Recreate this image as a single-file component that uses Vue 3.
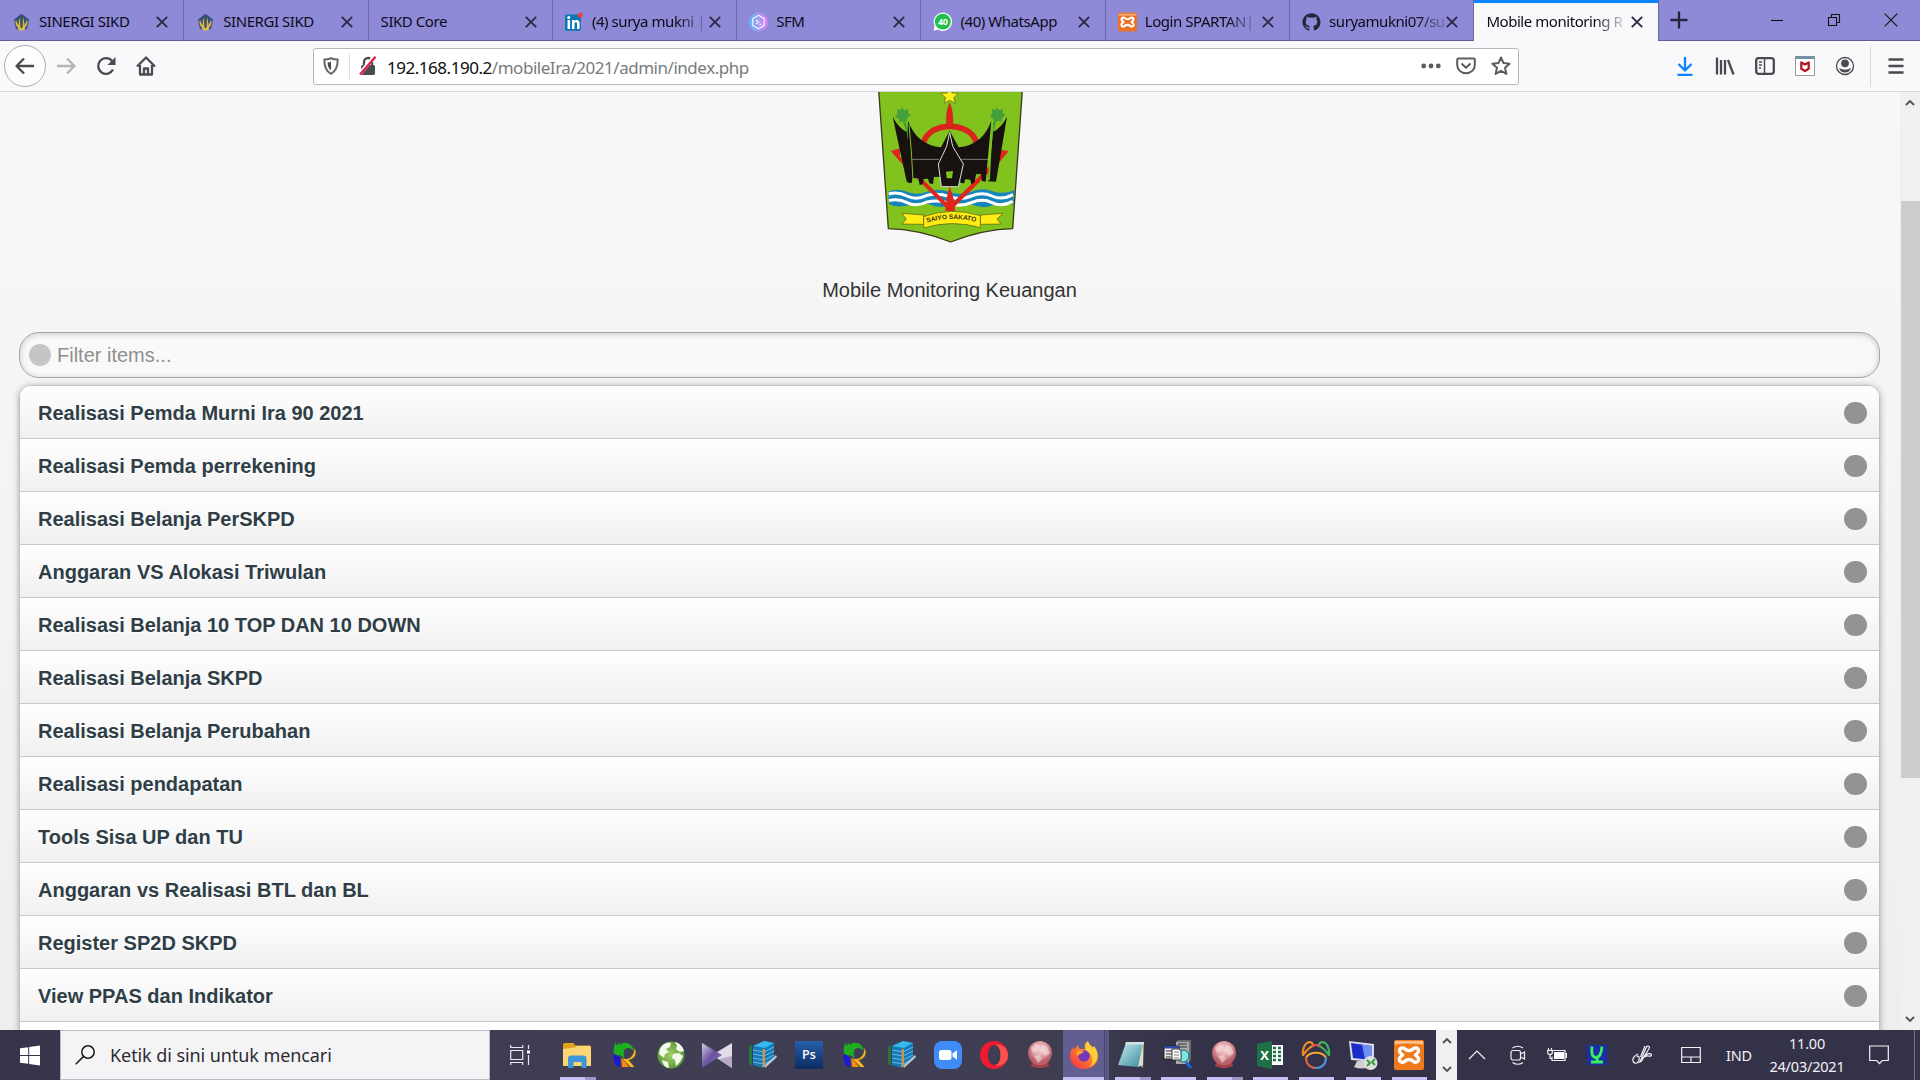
<script setup>
const tabs = [
  { title: 'SINERGI SIKD', icon: 'sikd' },
  { title: 'SINERGI SIKD', icon: 'sikd' },
  { title: 'SIKD Core' },
  { title: '(4) surya mukni |', icon: 'linkedin', fade: true },
  { title: 'SFM', icon: 'sfm' },
  { title: '(40) WhatsApp', icon: 'whatsapp' },
  { title: 'Login SPARTAN|', icon: 'xampp', fade: true },
  { title: 'suryamukni07/su', icon: 'github', fade: true },
  { title: 'Mobile monitoring R', active: true, fade: true },
]

const items = [
  'Realisasi Pemda Murni Ira 90 2021',
  'Realisasi Pemda perrekening',
  'Realisasi Belanja PerSKPD',
  'Anggaran VS Alokasi Triwulan',
  'Realisasi Belanja 10 TOP DAN 10 DOWN',
  'Realisasi Belanja SKPD',
  'Realisasi Belanja Perubahan',
  'Realisasi pendapatan',
  'Tools Sisa UP dan TU',
  'Anggaran vs Realisasi BTL dan BL',
  'Register SP2D SKPD',
  'View PPAS dan Indikator',
]

// state: '' = pinned only, 'one' = one window, 'many' = stacked windows
const apps = [
  { icon: 'explorer', state: 'many' },
  { icon: 'swirl', state: '' },
  { icon: 'globe', state: '' },
  { icon: 'kmp', state: '' },
  { icon: 'books', state: '' },
  { icon: 'ps', state: '' },
  { icon: 'swirl', state: '' },
  { icon: 'books', state: '' },
  { icon: 'zoom', state: '' },
  { icon: 'opera', state: '' },
  { icon: 'redglobe', state: '' },
  { icon: 'firefox', state: 'many', active: true },
  { icon: 'notepad', state: 'many' },
  { icon: 'server', state: 'one' },
  { icon: 'redglobe', state: 'many' },
  { icon: 'excel', state: 'one' },
  { icon: 'navicat', state: 'one' },
  { icon: 'remote', state: 'one' },
  { icon: 'xamppBig', state: 'one' },
]

const xamppMark =
  '<path d="M9.6 8.2c-3-.6-4.4 1.2-4 3.2.2 1.6 1.6 2.2 3 3.6-1.6 1.4-3 2.2-3.2 3.9-.3 2.2 1.4 3.8 4.2 3.1 1.400-.3 1.800-2.500 5.400-2.500s4 2.200 5.400 2.500c2.800.700 4.500-.9 4.200-3.100-.2-1.700-1.600-2.500-3.200-3.900 1.400-1.400 2.800-2 3-3.600.4-2-1-3.800-4-3.200-1.600.3-2.200 2.400-5.400 2.400s-3.800-2.100-5.400-2.400z" fill="none" stroke="#fff" stroke-width="3.400" stroke-linejoin="round"/>'

// every glyph is drawn on a 30 x 30 grid
const glyphs = {
  sikd:
    '<path d="M15 2 27 11 23.500 27h-17L3 11z" fill="#33527c"/><path d="M6 11c-2 9 3 14 8 15l-1-13-1-5-2 12zM24 11c2 9-3 14-8 15l1-13 1-5 2 12z" fill="#d9b944"/><path d="M12.500 7h5l-1 16h-3z" fill="#4a5560"/><path d="M8 25h14l-3 3h-8z" fill="#e3c54d"/>',
  linkedin:
    '<rect x="0" y="3" width="25" height="26" rx="2" fill="#0b76b4"/><path d="M4 12h4v14H4zM11 12h4v2c2-3.500 8-3 8 3v9h-4v-8c0-4-4-3-4 0v8h-4z" fill="#fff"/><circle cx="6" cy="8" r="2.400" fill="#fff"/><circle cx="24" cy="4" r="4" fill="#e8433f"/>',
  sfm:
    '<circle cx="15" cy="15" r="15" fill="url(#g-sfm)"/><path d="M15 4.500 24 9.500v11L15 25.500 6 20.500v-11z" fill="none" stroke="#fff" stroke-width="1.700"/><path d="m11 11.500 4 3.500-4 3.500M16 18.500h4" fill="none" stroke="#fff" stroke-width="1.700"/>',
  whatsapp:
    '<path d="M1 29 2.500 21A14.500 14.500 0 1 1 8 27z" fill="#fff"/><circle cx="15.500" cy="14.500" r="12.500" fill="#1fbf4b"/><text x="15.500" y="19.500" text-anchor="middle" font-family="Open Sans, sans-serif" font-weight="700" font-size="14" fill="#fff">40</text>',
  xampp: '<rect width="30" height="30" rx="3" fill="#ea7226"/><path d="M1 2h28v3H1z" fill="#f5a873"/>' + xamppMark,
  xamppBig:
    '<rect width="30" height="30" rx="2" fill="#ee7a1c"/><path d="M1 1h28v3.500C20 3 10 3 1 4.500z" fill="#f9c08d"/>' + xamppMark,
  github:
    '<path d="M15 1C7 1 .8 7.200.8 15c0 6.300 4 11.600 9.700 13.500.7.100 1-.3 1-.7v-2.600c-4 .9-4.800-1.700-4.800-1.700-.7-1.700-1.600-2.100-1.600-2.100-1.300-.9.100-.9.100-.9 1.400.1 2.200 1.500 2.200 1.500 1.300 2.200 3.300 1.500 4.100 1.200.1-.9.500-1.500.9-1.900-3.200-.4-6.500-1.600-6.500-7 0-1.600.5-2.800 1.400-3.800-.1-.4-.6-1.800.2-3.800 0 0 1.200-.4 3.900 1.500a13.500 13.500 0 0 1 7.200 0c2.700-1.900 3.900-1.500 3.900-1.500.8 2 .3 3.400.2 3.800.9 1 1.400 2.200 1.400 3.800 0 5.400-3.300 6.600-6.500 7 .5.400 1 1.300 1 2.600v3.900c0 .4.200.8 1 .7A14.200 14.200 0 0 0 29.200 15C29.200 7.200 23 1 15 1z" fill="#24243a"/>',
  explorer:
    '<path d="M1 4.500q0-1.500 1.500-1.500h9l2 2.500h14q1.500 0 1.500 1.500v18H1z" fill="#e0a21d"/><path d="M1 9 13 7.500 15 6h12.500Q29 6 29 7.500V26H1z" fill="#fdd674"/><path d="M6 28v-9.500q0-3 3-3h12.500q3 0 3 3V28h-5v-6h-8v6z" fill="#3a96d8"/>',
  swirl:
    '<path d="M4 14C3 9 4 5 6 2l.5 4L9 2.500 9.500 5C15 0 23 4 24 11c-4-4-9-4-10 0-1 3 1 4 0 7l-4-3-3 1z" fill="#1fae1f"/><path d="M4 14c5 1 7 4 6 12l-2 1C4 24 3 19 4 14z" fill="#1919d8"/><path d="M24.500 8c3 6 0 11-6 12l6 7h-4L12 18c7 3 12-1 12.500-10z" fill="#fdb516"/><path d="M11 18q4 3 8 9h-7z" fill="#f58a14"/>',
  globe:
    '<circle cx="15" cy="15" r="13.500" fill="url(#g-green)"/><path d="M4 9C7 3 12 2 15 3l-1 4-4 2 3 3-4 2-1 4-5-4zM19 2c5 1 8 5 9 9l-4 1-4-3 1-3zM17 14l6-1 4 3-3 6-4 4-1-6-3-2zM6 20l6 2 1 6c-3 0-6-3-7-8z" fill="#f5f8ee"/>',
  kmp:
    '<path d="M30 3 10 15l20 13z" fill="#e1dbea"/><path d="m30 16v12L17 19z" fill="#b9a9cc"/><path d="M0 3 20 15 0 28z" fill="url(#g-kmp)"/>',
  books:
    '<path d="m1 7 3-2v21l-3-2z" fill="#27763c"/><path d="m5 6 11-5 10 2v17L15 28 5 25z" fill="#1479b7"/><path d="m5 6 11-5 10 2-9 5z" fill="#36b8ec"/><path d="M5 10l11 2 10-5M5 14l11 2 10-5M5 18l11 2 10-5M5 22l11 2 10-5" stroke="#6dbbe6" stroke-width="1" fill="none"/><path d="M14.500 9h2.500v18h-2.500z" fill="#c7964f"/><path d="m17 25 11-10 1 2-12 11z" fill="#b9c8d2"/>',
  ps: '<rect x="1" y="1" width="28" height="28" fill="url(#g-ps)"/><text x="15" y="19" text-anchor="middle" font-family="Open Sans, sans-serif" font-weight="600" font-size="12.500" fill="#fff">Ps</text>',
  zoom:
    '<rect x="1" y="1" width="28" height="28" rx="8" fill="#3f8cf8"/><rect x="6" y="10" width="12.500" height="10" rx="2.500" fill="#fff"/><path d="m19.500 13.500 4.500-3.200v9.400l-4.500-3.200z" fill="#fff"/>',
  opera:
    '<path fill-rule="evenodd" d="M15 1a14 14 0 1 0 0 28 14 14 0 0 0 0-28zM15.500 5c4 0 6 4.500 6 10s-2 10-6 10-6.500-4.500-6.500-10 2.500-10 6.500-10z" fill="#ec1c2e"/><path d="M15.500 5c4-2 13 1 13.500 10S20 27 15.500 25c4 0 6-4.500 6-10s-2-10-6-10z" fill="#fb504c"/>',
  redglobe:
    '<path d="M7 22h16l1 4q-9 4-18 0z" fill="#a83f49"/><circle cx="15" cy="13" r="12" fill="url(#g-red)"/><path d="m6 8 5-4 4 2-3 5-4 2zM17 5l5 2 3 6-4 3-5-5zM9 16l5-1 3 4-4 4z" fill="#f7dfe0" opacity=".6"/>',
  firefox:
    '<path d="M15 29C6 29 1 23 1 16c0-4 1.500-7 3-9l1 3c1-2 3-4 4-5 0 2 1 3 2 4h5c-1-4 0-6 3-8 1 4 3 4 5 7l1-2c3 4 4 7 4 10 0 8-6 13-14 13z" fill="url(#g-fox)"/><path d="M19 1c1 4 3 4 5 7l1-2c6 9 3 17-4 21 4-6 3-12-2-15-3-3-4-6 0-11z" fill="#ffcd38"/><circle cx="15" cy="16" r="5.800" fill="#7139ba"/><path d="M8 11c3-2 6 0 7 1-2 2-4 1-6 4-2-1-2-3-1-5z" fill="#ff9a31"/>',
  notepad:
    '<path d="m9 3 18 1-1 24-6-5z" fill="#b0a37f"/><path d="M9 3h17l-5 24L1 25z" fill="url(#g-note)"/><path d="M9 2h18v2.500H8z" fill="#d7e0e3"/><path d="m26 4-5 23 5-2z" fill="#dedbd0"/>',
  server:
    '<path d="M13 2h13v22H13z" fill="#a9a9a9"/><path d="M13 2 15 0h13l-2 2zM26 2l2-2v20l-2 2z" fill="#6c6c6c"/><path d="M15 4h9M15 7h9" stroke="#333"/><rect x="1" y="6" width="15" height="13" fill="#e9e9e9" stroke="#222"/><path d="M1 6h15v2.500H1z" fill="#3048a8"/><path d="M3 11h6M3 14h6M3 17h5" stroke="#333"/><circle cx="20" cy="16" r="6" fill="#7ae4e0" stroke="#156a73"/><path d="M9 9h7l2 2v9H9z" fill="#fff" stroke="#333"/><path d="M11 12h5M11 15h5M11 18h5" stroke="#777"/><path d="m23 22 5 6" stroke="#1c62dc" stroke-width="3"/>',
  excel:
    '<path d="M14 5h14v20H14z" fill="#fff"/><path d="M18 8h3M23 8h3M18 12h3M23 12h3M18 16h3M23 16h3M18 20h3M23 20h3" stroke="#1f7145" stroke-width="2.500"/><path d="m2 4 15-3v28L2 26z" fill="#1f7145"/><text x="9.500" y="20" text-anchor="middle" font-family="Open Sans, sans-serif" font-weight="700" font-size="13" fill="#fff">X</text>',
  navicat:
    '<g fill="none" stroke-width="2.200" stroke-linecap="round"><path d="M2 15C1 9 4 3 8 2c3 0 4 2 4 4-4 1-7 5-10 9" stroke="#f28a24"/><path d="M28 15c1-6-2-12-6-13-3 0-4 2-4 4 4 1 7 5 10 9" stroke="#3db45c"/><path d="M12 6q3-2 6 0" stroke="#e8504d"/><path d="M5 18c3-7 17-7 20 0" stroke="#f2a52e"/><path d="M5 18c0 6 4 10 10 10" stroke="#e25e3c"/><path d="M25 18c0 6-4 10-10 10" stroke="#4b95dd"/></g>',
  remote:
    '<path d="M9 21h9l3 6q-8 3-15 0z" fill="#cfcfd2"/><path d="m1 1 25 3v18L3 20z" fill="#d8dbe4"/><path d="m3 3 21 3v14L5 18z" fill="#1a2fc9"/><path d="m14 4.500 10 1.500v14l-7-.6z" fill="#6f8ff0"/><circle cx="22.500" cy="23" r="7" fill="#dedede"/><path d="m19 20 3 3-3 3M27 19l-3 3 3 3" stroke="#2c9a32" stroke-width="1.800" fill="none"/>',
}
</script>

<template>
  <div class="screen">
    <svg class="defs" width="0" height="0">
      <defs>
        <linearGradient id="g-sfm"><stop offset="0" stop-color="#62b4fb" /><stop offset="1" stop-color="#dc82ee" /></linearGradient>
        <radialGradient id="g-green"><stop offset="0" stop-color="#a4cf68" /><stop offset="1" stop-color="#5d9c37" /></radialGradient>
        <linearGradient id="g-kmp" x2="1" y2="1"><stop offset="0" stop-color="#d5cfe6" /><stop offset=".5" stop-color="#6951a0" /><stop offset="1" stop-color="#8b78b4" /></linearGradient>
        <linearGradient id="g-ps" x2="0" y2="1"><stop offset="0" stop-color="#265ea8" /><stop offset="1" stop-color="#0c2c62" /></linearGradient>
        <radialGradient id="g-red" cy=".35"><stop offset="0" stop-color="#f3d5d7" /><stop offset=".6" stop-color="#dfa0a5" /><stop offset="1" stop-color="#b9626b" /></radialGradient>
        <linearGradient id="g-fox" x1="1" x2="0" y2="1"><stop offset="0" stop-color="#ffd83b" /><stop offset=".5" stop-color="#ff7a2b" /><stop offset="1" stop-color="#f0284f" /></linearGradient>
        <linearGradient id="g-note" x2="1" y2="1"><stop offset="0" stop-color="#cdeaf0" /><stop offset=".6" stop-color="#6fb3c0" /><stop offset="1" stop-color="#3d8896" /></linearGradient>
      </defs>
    </svg>

    <header class="tabbar">
      <div v-for="(t, i) in tabs" :key="i" class="tab" :class="{ active: t.active }">
        <svg v-if="t.icon" class="favicon" viewBox="0 0 30 30" v-html="glyphs[t.icon]"></svg>
        <span class="tab-title"><span :class="{ fade: t.fade }">{{ t.title }}</span></span>
        <svg class="tab-close" viewBox="0 0 12 12"><path d="m.8.8 10.400 10.400M11.200.8.800 11.200" /></svg>
      </div>
      <svg class="plus" viewBox="0 0 18 18"><path d="M9 .5v17M.5 9h17" /></svg>
      <div class="window-buttons">
        <svg viewBox="0 0 14 14"><path d="M1 7.500h12" /></svg>
        <svg viewBox="0 0 14 14"><path d="M1.500 4.500h8v8h-8zM4.500 4.500v-3h8v8h-3" /></svg>
        <svg viewBox="0 0 14 14"><path d="m.7.7 12.600 12.600M13.300.7.700 13.300" /></svg>
      </div>
    </header>

    <nav class="toolbar">
      <div class="nav-buttons">
        <span class="back"><svg viewBox="0 0 20 20"><path d="M19 10H1.500M9 2.500 1.500 10 9 17.500" /></svg></span>
        <svg class="forward" viewBox="0 0 20 20"><path d="M1 10h17.500M11 2.500l7.500 7.500-7.500 7.500" /></svg>
        <svg viewBox="0 0 20 20"><path d="M17 13.500A7.800 7.800 0 1 1 16 5" /><path class="solid" d="M19.500 1v8h-8z" /></svg>
        <svg viewBox="0 0 20 20"><path d="M1 10.500 10 1.500l9 9M4 9v9.500h12V9" /><path d="M8 18v-5.500h4V18" /></svg>
      </div>
      <div class="urlbar">
        <svg class="shield" viewBox="0 0 16 18"><path d="M8 1.200c2.500 1 4.500 1.400 6.700 1.400 0 6-.8 11.500-6.700 14.200C2.100 14.100 1.300 8.600 1.300 2.600 3.500 2.600 5.500 2.200 8 1.200z" /><path class="solid" d="M8 4.500c-1 .6-2.200.9-3.400 1 .1 3.500.8 6 3.400 7.800z" /></svg>
        <i class="url-split"></i>
        <svg class="lock" viewBox="0 0 18 20"><path d="M5 9V6a4 4 0 0 1 8 0v3" /><rect class="solid" x="2" y="9" width="14" height="10" rx="1.500" /><path class="gap" d="M1 17.500 15.500.500" /><path class="slash" d="M1 18.500 16.500.800" /></svg>
        <span class="url"><b>192.168.190.2</b>/mobileIra/2021/admin/index.php</span>
        <svg class="dots" viewBox="0 0 20 20"><circle cx="2.700" cy="10" r="2.400" /><circle cx="10" cy="10" r="2.400" /><circle cx="17.300" cy="10" r="2.400" /></svg>
        <svg class="line-icon" viewBox="0 0 20 20"><path d="M2.500 2.500h15q1.300 0 1.300 1.300V9a8.800 8.300 0 0 1-17.600 0V3.800q0-1.300 1.300-1.300zM5.500 7.500 10 11.700l4.500-4.200" /></svg>
        <svg class="line-icon" viewBox="0 0 20 20"><path d="m10 1.500 2.500 5.600 6.100.6-4.600 4.100 1.400 6.100L10 14.800l-5.400 3.100L6 11.800 1.400 7.700l6.100-.6z" /></svg>
      </div>
      <div class="tools">
        <svg class="download" viewBox="0 0 20 20"><path d="M10 1v13M3.500 8l6.500 6.500L16.500 8M2.500 19h15" /></svg>
        <svg viewBox="0 0 20 20"><path d="M2 1.500v17M6 4v14.500M10 4v14.500M13 4l5.500 14.500" /></svg>
        <svg viewBox="0 0 20 20"><rect x="1.200" y="2.200" width="17.600" height="15.600" rx="2.500" /><path d="M9.500 2v16" stroke-width="1.500" /><path d="M4 6h3M4 9h3M4 12h2" stroke-width="1.300" /></svg>
        <svg viewBox="0 0 20 20"><rect class="mc-box" x=".5" y=".5" width="19" height="19" /><path class="mc-bar" d="M.5 1.500h19" /><path class="mc-mark" d="M6.300 6.500 10 8.500l3.700-2v6.200L10 15l-3.700-2.300z" /></svg>
        <svg viewBox="0 0 20 20"><circle class="ring" cx="10" cy="10" r="8.500" /><circle class="solid" cx="10" cy="7.300" r="3.900" /><path class="solid" d="M4 12q6 3.500 12 0-1.500 4.500-6 4.500T4 12z" /></svg>
        <i class="tool-split"></i>
        <svg class="menu" viewBox="0 0 20 20"><path d="M2.500 3.500h15M2.500 10h15M2.500 16.500h15" /></svg>
      </div>
    </nav>

    <section class="viewport">
      <main class="page">
        <svg class="crest" viewBox="50 21 440 456">
          <path d="M55 15 84 431q90 2 187 40 97-38 186-40l29-416z" fill="#82c21f" stroke="#3b3b20" stroke-width="4" />
          <path d="m268 8 7 16 20 1-15 13 5 17-17-9-17 9 5-17-15-13 20-1z" fill="#fdee1d" stroke="#66601a" stroke-width="2" />
          <g fill="#43a03a"><path d="m125 66 7 10 12-5-1 13 8 6-10 8-1 12-12-3-10 6-3-12-11-6 8-9-2-13 12 1zM409 66l7 10 12-5-1 13 8 6-10 8-1 12-12-3-10 6-3-12-11-6 8-9-2-13 12 1z" /><path d="m124 100 8 0 16 48-6 4zM402 100h8l-12 48-8-3z" /></g>
          <path d="M190 172c18-64 139-64 158 0" fill="none" stroke="#d9251c" stroke-width="17" />
          <path d="M268 54q14 32 8 74h-16q-7-42 8-74z" fill="#e32219" stroke="#8b2516" stroke-width="1" />
          <path d="M83 320q28-12 57 0t60 0q33-12 65 0t68 0q30-14 62-2t67-2l-4 44q-29-14-60 1-32 13-65-3-32-10-63 3-31 11-64-3-30-10-60 2-32 10-59-2z" fill="#1685bd" />
          <g fill="none" stroke="#fff" stroke-width="9"><path d="M85 327q28-8 55 6t60-2q34-8 67 4t66-2 62 0 63-4" /><path d="M86 347q28-8 54 6t60-2q34-8 67 4t66-2 62 0 62-4" /></g>
          <path d="m91 198 30-8-3 24 150 148 148-148-1-20 30 4-28 34-149 148-147-148z" fill="#df261b" />
          <path d="M97 95q18 35 42 45l15 149-15 1zM440 95q-18 35-42 45l-15 149 24 1zM143 107q26 72 99 80l26-50 27 50q73-8 98-80l-17 183-11-2-3-21-15 1-4 24-10 6-3-14-16-1-2 12-11-1-4-20-76 2-3 21-11-2-4-14-13 1-3 16-9 2-4-20-17-1-3 15-11-1-3-42z" fill="#17120f" />
          <path d="M146 118q8 80 12 168" stroke="#82c21f" stroke-width="3" fill="none" />
          <path d="M396 118q-6 80-10 168" stroke="#82c21f" stroke-width="5" fill="none" />
          <path d="M156 223h80M303 223h82" stroke="#b5b5b0" stroke-width="2" />
          <path d="m268 142 9 42 32 53-15 68h-51l-9-68 25-53z" fill="#17120f" stroke="#ddd" stroke-width="3" />
          <path d="m257 260 21-2-3 22h-16z" fill="#82c21f" />
          <path d="m268 304 11 34 5 40h-29l4-40z" fill="#e32219" />
          <path d="m124 385 66 5v28l-65-1 13-15zM428 385l-68 5v28l62-1-12-15z" fill="#ffec12" stroke="#5b5610" stroke-width="2" />
          <path d="m190 395q83-30 170-3v36q-86-25-170 1z" fill="#ffec12" stroke="#5b5610" stroke-width="2" />
          <path id="motto" d="M200 413q72-22 156 0" fill="none" />
          <text font-family="Liberation Sans, Arial, sans-serif" font-weight="700" font-size="20" fill="#3c3812"><textPath href="#motto" textLength="148">SAIYO SAKATO</textPath></text>
        </svg>
        <h1>Mobile Monitoring Keuangan</h1>
        <div class="filter"><i></i><span>Filter items...</span></div>
        <ul class="list">
          <li v-for="item in items" :key="item"><span>{{ item }}</span><i></i></li>
          <li></li>
        </ul>
      </main>
      <aside class="scrollbar">
        <svg viewBox="0 0 10 6"><path d="m1 5 4-4 4 4" /></svg>
        <i></i>
        <svg viewBox="0 0 10 6"><path d="m1 1 4 4 4-4" /></svg>
      </aside>
    </section>

    <footer class="taskbar">
      <div class="start"><svg viewBox="0 0 20 20"><path d="M0 2.800 8.200 1.700v7.800H0zM9.200 1.500 20 0v9.500H9.200zM0 10.400h8.200v7.900L0 17.200zM9.200 10.400H20V20L9.200 18.500z" /></svg></div>
      <div class="search">
        <svg viewBox="0 0 20 20"><circle cx="13" cy="7" r="6.200" /><path d="M8.600 11.400.7 19.300" /></svg>
        <span>Ketik di sini untuk mencari</span>
      </div>
      <svg class="taskview" viewBox="0 0 20 20"><path d="M.700 5.500h12v9H.700zM.700 0v2.500h12V0M.700 20v-2.500h12V20M18.500 0v4M18.500 10v10" /><path class="solid" d="M17 5.500h3v3h-3z" /></svg>
      <div class="apps">
        <div v-for="(a, i) in apps" :key="i" class="app" :class="[a.state, { active: a.active }]">
          <svg viewBox="0 0 30 30" v-html="glyphs[a.icon]"></svg>
        </div>
      </div>
      <div class="app-scroll">
        <svg viewBox="0 0 10 6"><path d="m1 5 4-4 4 4" /></svg>
        <svg viewBox="0 0 10 6"><path d="m1 1 4 4 4-4" /></svg>
      </div>
      <div class="tray">
        <svg class="t-caret" viewBox="0 0 20 20"><path d="m2 14 8-8 8 8" /></svg>
        <svg class="t-cam" viewBox="0 0 20 20"><rect x="3" y="5.500" width="9.500" height="9.500" rx="2" /><path d="m12.500 9 4-2v7l-4-2M4.500 3Q10-.5 15 3M4.500 17.500q5.500 3.500 10.500 0" /></svg>
        <svg class="t-bat" viewBox="0 0 20 20"><path d="M6 5.500h12v10H5v-4M18.500 8.500h1v4h-1M1.500 3v2.500M4.500 3v2.500M.7 5.500h4.600v2q0 2-2.300 2-2.300 0-2.300-2zM3 9.500v4h2" /><path class="solid" d="M7 7h10v7H7z" /></svg>
        <svg class="t-u" viewBox="0 0 20 20"><rect class="u-box" width="20" height="20" /><path class="u-mark" d="M5 1.500q-1.500 11 4 11 5 0 6-11M10 12.500l.5 4M4 17h12" /></svg>
        <svg class="t-pen" viewBox="0 0 20 20"><path d="M8 17 14 3q1.500-3 3-1.500 1 1-.5 3L9.500 16zM6 9q-6 3-5 7 1 3 4 2 3-2 2-6-1-2-2 0M12 11q6-4 7.500-1.500.5 2-3.500 1.500-3-.5-6 3M8.500 12 13 1" /></svg>
        <svg class="t-pad" viewBox="0 0 20 20"><path d="M.7 2.500h18.600v15H.7zM.7 12h18.600M10 12v5.500" /></svg>
        <span class="lang">IND</span>
        <div class="clock"><span>11.00</span><span>24/03/2021</span></div>
        <svg class="t-note" viewBox="0 0 20 20"><path d="M.7 1h18.600v14.500h-6L10.500 18.500 7.700 15.500h-7z" /></svg>
        <i class="peek"></i>
      </div>
    </footer>
  </div>
</template>

<style>
body {
  margin: 0;
  overflow: hidden;
}
</style>

<style scoped>
.screen {
  display: flex;
  flex-direction: column;
  width: 1920px;
  height: 1080px;
  overflow: hidden;
  font-family: 'Noto Sans', 'Open Sans', sans-serif;
}
.screen * {
  box-sizing: border-box;
}
.defs {
  position: absolute;
}
svg {
  display: block;
  flex: none;
}

/* tab strip */
.tabbar {
  display: flex;
  height: 41px;
  flex: none;
  background: #8f8ad8;
  box-shadow: inset 0 -1px #625f98;
}
.tab {
  display: flex;
  align-items: center;
  width: 184.3px;
  height: 41px;
  flex: none;
  padding: 2px 15px 0 12px;
  border-right: 1px solid #6c68a8;
  font-size: 15px;
  letter-spacing: -0.45px;
  color: #0c0c18;
}
.tab.active {
  background: #f9f9fb;
  border-top: 3px solid #0a84ff;
  padding-top: 0;
}
.favicon {
  width: 19px;
  height: 20px;
  margin-right: 8px;
}
.tab-title {
  flex: 1;
  margin-top: -2px;
  white-space: nowrap;
}
.tab-title .fade {
  mask-image: linear-gradient(to left, rgba(0, 0, 0, 0.2) 0, #000 28px);
}
.tab-close {
  width: 12px;
  height: 12px;
}
.tab-close path {
  stroke: #2b2944;
  stroke-width: 1.900;
}
.plus {
  width: 18px;
  height: 18px;
  margin: 11px 0 0 11px;
  fill: none;
  stroke: #252340;
  stroke-width: 2.300;
}
.window-buttons {
  display: flex;
  gap: 43px;
  margin: 13px 22px 0 auto;
}
.window-buttons svg {
  width: 14px;
  height: 14px;
  fill: none;
  stroke: #111;
  stroke-width: 1.100;
}

/* navigation toolbar */
.toolbar {
  display: flex;
  align-items: center;
  height: 51px;
  flex: none;
  background: #f9f9fb;
  border-bottom: 1px solid #d8d8da;
}
.toolbar svg {
  width: 20px;
  height: 20px;
  fill: none;
  stroke: #4b4b4f;
  stroke-width: 2.300;
  stroke-linejoin: round;
}
.toolbar .solid {
  fill: #4b4b4f;
  stroke: none;
}
.nav-buttons {
  display: flex;
  align-items: center;
  gap: 20px;
  width: 313px;
  padding-left: 4px;
}
.back {
  display: flex;
  align-items: center;
  justify-content: center;
  width: 42px;
  height: 42px;
  margin-right: -10px;
  border: 1px solid #adadb0;
  border-radius: 50%;
  background: #fdfdfe;
}
.toolbar .forward {
  stroke: #b6b6b8;
}
.urlbar {
  display: flex;
  align-items: center;
  width: 1206px;
  height: 37px;
  padding: 0 7px 0 9px;
  border: 1px solid #b8b8bb;
  border-radius: 3px;
  background: #fff;
}
.toolbar .shield {
  width: 16px;
  height: 18px;
  stroke-width: 2;
  stroke: #66666a;
}
.url-split {
  width: 1px;
  height: 26px;
  margin: 0 9px 0 10px;
  background: #dedee0;
}
.toolbar .lock {
  width: 18px;
  height: 20px;
  margin-right: 10px;
}
.toolbar .lock .gap {
  stroke: #fff;
  stroke-width: 4;
}
.toolbar .lock .slash {
  stroke: #e2174a;
  stroke-width: 2.200;
}
.url {
  flex: 1;
  padding-top: 3px;
  font-size: 17px;
  letter-spacing: -0.47px;
  color: #7a7a7d;
  white-space: nowrap;
}
.url b {
  font-weight: 400;
  color: #0c0c0d;
}
.urlbar .dots {
  fill: #5c5c60;
  stroke: none;
}
.urlbar .line-icon {
  margin-left: 15px;
  stroke: #5c5c60;
  stroke-width: 2;
}
.tools {
  display: flex;
  align-items: center;
  gap: 20px;
  margin-left: 156px;
}
.tools .download {
  stroke: #0a84ff;
}
.tools .mc-box {
  fill: #fff;
  stroke: #999;
  stroke-width: 1;
}
.tools .mc-bar {
  stroke: #7590a0;
  stroke-width: 3;
}
.tools .mc-mark {
  stroke: #b7171f;
  stroke-width: 2.300;
}
.tools .ring {
  stroke-width: 1.300;
}
.tool-split {
  width: 1px;
  height: 42px;
  margin: 0 -5px 0 -5px;
  background: #d8d8da;
}

/* page */
.viewport {
  display: flex;
  height: 938px;
  flex: none;
  overflow: hidden;
}
.page {
  display: flex;
  flex-direction: column;
  align-items: stretch;
  width: 1900px;
  padding: 0 20px 0 19px;
  background: linear-gradient(#f8f8f8, #eee);
  font-family: 'Liberation Sans', Arial, sans-serif;
}
.crest {
  width: 146.700px;
  height: 152px;
  margin-left: 1px;
  align-self: center;
}
h1 {
  margin: 34px 0 0;
  text-align: center;
  font-size: 20px;
  font-weight: 400;
  line-height: 24px;
  color: #333;
}
.filter {
  display: flex;
  align-items: center;
  gap: 6px;
  height: 46px;
  margin-top: 30px;
  flex: none;
  padding-left: 9px;
  border: 1px solid #a5a5a5;
  border-radius: 20px;
  background: #f9f9f9;
  box-shadow: inset 0 1px 6px rgba(0, 0, 0, 0.2);
  font-size: 20px;
  color: #8f8f8f;
}
.filter i {
  width: 22px;
  height: 22px;
  border-radius: 50%;
  background: #c5c5c5;
}
.list {
  margin: 7px 0 0;
  padding: 0;
  flex: none;
  list-style: none;
  border: 1px solid #c0c0c0;
  border-radius: 12px 12px 0 0;
  overflow: hidden;
  box-shadow: 0 1px 6px rgba(0, 0, 0, 0.32);
}
.list li {
  display: flex;
  align-items: center;
  justify-content: space-between;
  height: 53px;
  padding: 1px 12px 0 18px;
  border-bottom: 1px solid #c8c8c8;
  background: linear-gradient(#fff, #f0f0f0);
  font-size: 20px;
  font-weight: 700;
  color: #2f3e46;
  text-shadow: 0 1px 0 #fff;
}
.list span {
  padding-top: 1px;
}
.list i {
  width: 23px;
  height: 22px;
  border-radius: 11px;
  background: #939393;
}
.scrollbar {
  display: flex;
  flex-direction: column;
  align-items: center;
  width: 20px;
  padding: 8px 0;
  background: #f0f0f0;
}
.scrollbar svg,
.app-scroll svg {
  width: 10px;
  height: 6px;
  fill: none;
  stroke: #505050;
  stroke-width: 1.800;
}
.scrollbar i {
  width: 20px;
  height: 577px;
  margin: 95px 0 auto;
  border-left: 1px solid #f0f0f0;
  background: #cdcdcd;
}

/* taskbar */
.taskbar {
  display: flex;
  height: 50px;
  flex: none;
  background: linear-gradient(90deg, #36344a 0, #403e54 30%, #3f3d52 55%, #343249 62%, #343249);
}
.start {
  display: flex;
  align-items: center;
  justify-content: center;
  width: 60px;
}
.start svg {
  width: 20px;
  height: 21px;
  fill: #fff;
}
.search {
  display: flex;
  align-items: center;
  gap: 15px;
  width: 430px;
  padding-left: 14px;
  border: 1px solid #bcbcc2;
  background: #f4f4f6;
  font-size: 18px;
  letter-spacing: -0.08px;
  color: #2c2c30;
}
.search svg {
  width: 20px;
  height: 20px;
  fill: none;
  stroke: #1c1c1c;
  stroke-width: 1.500;
}
.taskview {
  width: 20px;
  height: 20px;
  margin: 15px 24px 0 20px;
  fill: none;
  stroke: #e8e8ee;
  stroke-width: 1.200;
}
.taskview .solid {
  fill: #fff;
  stroke: none;
}
.apps {
  display: flex;
  width: 882px;
  flex: none;
}
.app {
  display: flex;
  width: 46.100px;
  height: 50px;
  flex: none;
  padding: 10px 0 0 8px;
  background-repeat: no-repeat;
  background-position: 6px 47px;
}
.app:first-child {
  width: 48px;
}
.app svg {
  width: 30px;
  height: 30px;
}
.app.one {
  background-image: linear-gradient(#c6bff6, #c6bff6);
  background-size: 35px 3px;
}
.app.many {
  background-image: linear-gradient(90deg, #c6bff6 25px, #9d97c6 25px);
  background-size: 36px 3px;
}
.app.active {
  padding-left: 6px;
  background-color: #625e92;
  background-image: linear-gradient(90deg, #c6bff6 41px, #9d97c6 41px);
  background-position: 0 47px;
  background-size: 46px 3px;
  box-shadow: inset -4px 0 #5a5785, inset -5px 0 #48456c;
}
.app-scroll {
  display: flex;
  flex-direction: column;
  align-items: center;
  justify-content: space-between;
  width: 21px;
  flex: none;
  padding: 8px 0;
  background: #f0f0f0;
}
.tray {
  display: flex;
  align-items: center;
  flex: 1;
  color: #f2f2f6;
  font-size: 14.500px;
  letter-spacing: -0.2px;
}
.tray svg {
  width: 20px;
  height: 20px;
  fill: none;
  stroke: #f2f2f6;
  stroke-width: 1.200;
}
.tray .solid {
  fill: #fff;
  stroke: none;
}
.tray .u-box {
  fill: #1b2ea8;
  stroke: none;
}
.tray .u-mark {
  stroke: #3af05a;
  stroke-width: 2.800;
}
.t-caret {
  margin-left: 10px;
}
.t-cam {
  margin-left: 21px;
}
.t-bat {
  margin-left: 19px;
}
.t-u {
  margin-left: 20px;
}
.t-pen {
  margin-left: 25px;
}
.t-pad {
  margin-left: 29px;
}
.lang {
  width: 28px;
  margin-left: 25px;
}
.clock {
  display: flex;
  flex-direction: column;
  align-items: center;
  width: 90px;
  margin-left: 8px;
  line-height: 23px;
}
.t-note {
  margin-left: 17px;
}
.peek {
  width: 1px;
  height: 50px;
  margin: 0 5px 0 auto;
  background: #77758a;
}
</style>
